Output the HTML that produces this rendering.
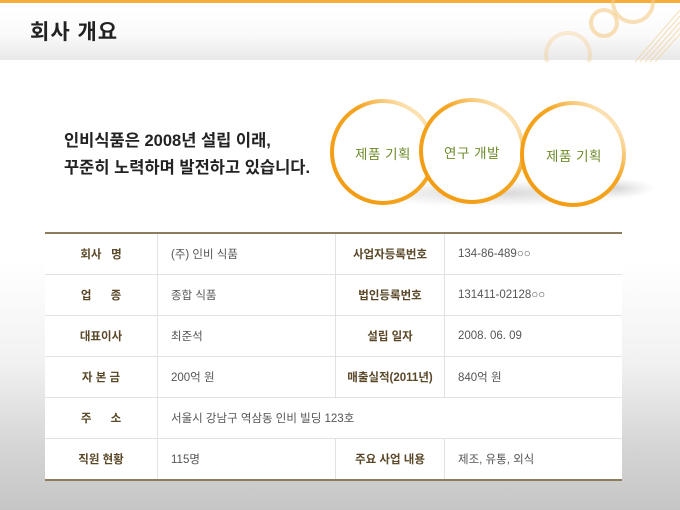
<!DOCTYPE html>
<html><head><meta charset="utf-8">
<style>
body{margin:0;width:680px;height:510px;overflow:hidden;position:relative;font-family:"Liberation Sans","Noto Sans CJK KR","NanumGothic",sans-serif;
background:linear-gradient(#fff 0,#fff 260px,#f2f2f2 360px,#d4d4d4 450px,#c6c6c6 510px);}
.top{position:absolute;left:0;top:0;width:680px;height:60px;background:linear-gradient(#fff 10px,#fafafa 35px,#e8e8e8 60px);}
.stripe{position:absolute;left:0;top:0;width:680px;height:3px;background:#f7ad3a;}
h1{position:absolute;left:30px;top:16px;margin:0;font-size:21px;font-weight:bold;color:#222;letter-spacing:1px}
.intro{position:absolute;left:64px;top:128px;font-size:16.5px;font-weight:bold;color:#222;line-height:27px;letter-spacing:0}
table{position:absolute;left:45px;top:232px;width:577px;border-collapse:collapse;background:#fff;border-top:2px solid #8c7b5c;border-bottom:2px solid #8c7b5c;font-size:11.5px}
td{height:40px;border:1px solid #e2e2e2;color:#555;padding:0 0 0 13px}
td.l{text-align:center;color:#5a4828;font-weight:bold;padding:0}
tr td:first-child{border-left:none}tr td:last-child{border-right:none}
.c{position:absolute;font-size:13.5px;color:#6d8c2a;text-align:center;letter-spacing:.5px}
</style></head><body>
<div class="top"></div>
<div class="stripe"></div>
<svg style="position:absolute;left:540px;top:0" width="140" height="62">
<g fill="none" stroke="#f5c985" stroke-opacity=".6" stroke-width="4">
<circle cx="93" cy="2" r="20"/><circle cx="64" cy="23" r="13"/><circle cx="28" cy="55" r="22" stroke-opacity=".35"/>
</g>
<g stroke="#f3cf9a" stroke-width="1" opacity=".7">
<path d="M95 62 L140 10 M100 62 L140 16 M105 62 L140 22 M110 62 L140 28 M115 62 L140 34"/>
</g>
</svg>
<h1>회사 개요</h1>
<div class="intro">인비식품은 2008년 설립 이래,<br>꾸준히 노력하며 발전하고 있습니다.</div>
<svg style="position:absolute;left:325px;top:90px" width="330" height="130">
<defs>
<linearGradient id="g" x1="0" y1="1" x2="1" y2="0"><stop offset="0" stop-color="#f29a10"/><stop offset=".6" stop-color="#f5a520"/><stop offset=".85" stop-color="#fbe2b5"/><stop offset="1" stop-color="#f5a520"/></linearGradient>
<radialGradient id="s"><stop offset="0" stop-color="#bbb" stop-opacity=".6"/><stop offset="1" stop-color="#ccc" stop-opacity="0"/></radialGradient>
</defs>
<ellipse cx="170" cy="103" rx="150" ry="14" fill="url(#s)"/>
<ellipse cx="290" cy="98" rx="40" ry="10" fill="url(#s)"/>
<g fill="#fff" stroke="url(#g)" stroke-width="4">
<circle cx="58" cy="62" r="51"/><circle cx="147" cy="61" r="51"/><circle cx="248" cy="64" r="51"/>
</g>
</svg>
<div class="c" style="left:333px;top:143px;width:100px">제품 기획</div>
<div class="c" style="left:422px;top:142px;width:100px">연구 개발</div>
<div class="c" style="left:524px;top:145px;width:100px">제품 기획</div>
<table>
<tr><td class="l" style="width:112px">회사&nbsp;&nbsp;&nbsp;명</td><td style="width:164px">(주) 인비 식품</td><td class="l" style="width:108px">사업자등록번호</td><td>134-86-489○○</td></tr>
<tr><td class="l">업&nbsp;&nbsp;&nbsp;&nbsp;&nbsp;&nbsp;종</td><td>종합 식품</td><td class="l">법인등록번호</td><td>131411-02128○○</td></tr>
<tr><td class="l">대표이사</td><td>최준석</td><td class="l">설립 일자</td><td>2008. 06. 09</td></tr>
<tr><td class="l">자 본 금</td><td>200억 원</td><td class="l">매출실적(2011년)</td><td>840억 원</td></tr>
<tr><td class="l">주&nbsp;&nbsp;&nbsp;&nbsp;&nbsp;&nbsp;소</td><td colspan="3">서울시 강남구 역삼동 인비 빌딩 123호</td></tr>
<tr><td class="l">직원 현황</td><td>115명</td><td class="l">주요 사업 내용</td><td>제조, 유통, 외식</td></tr>
</table>
</body></html>
